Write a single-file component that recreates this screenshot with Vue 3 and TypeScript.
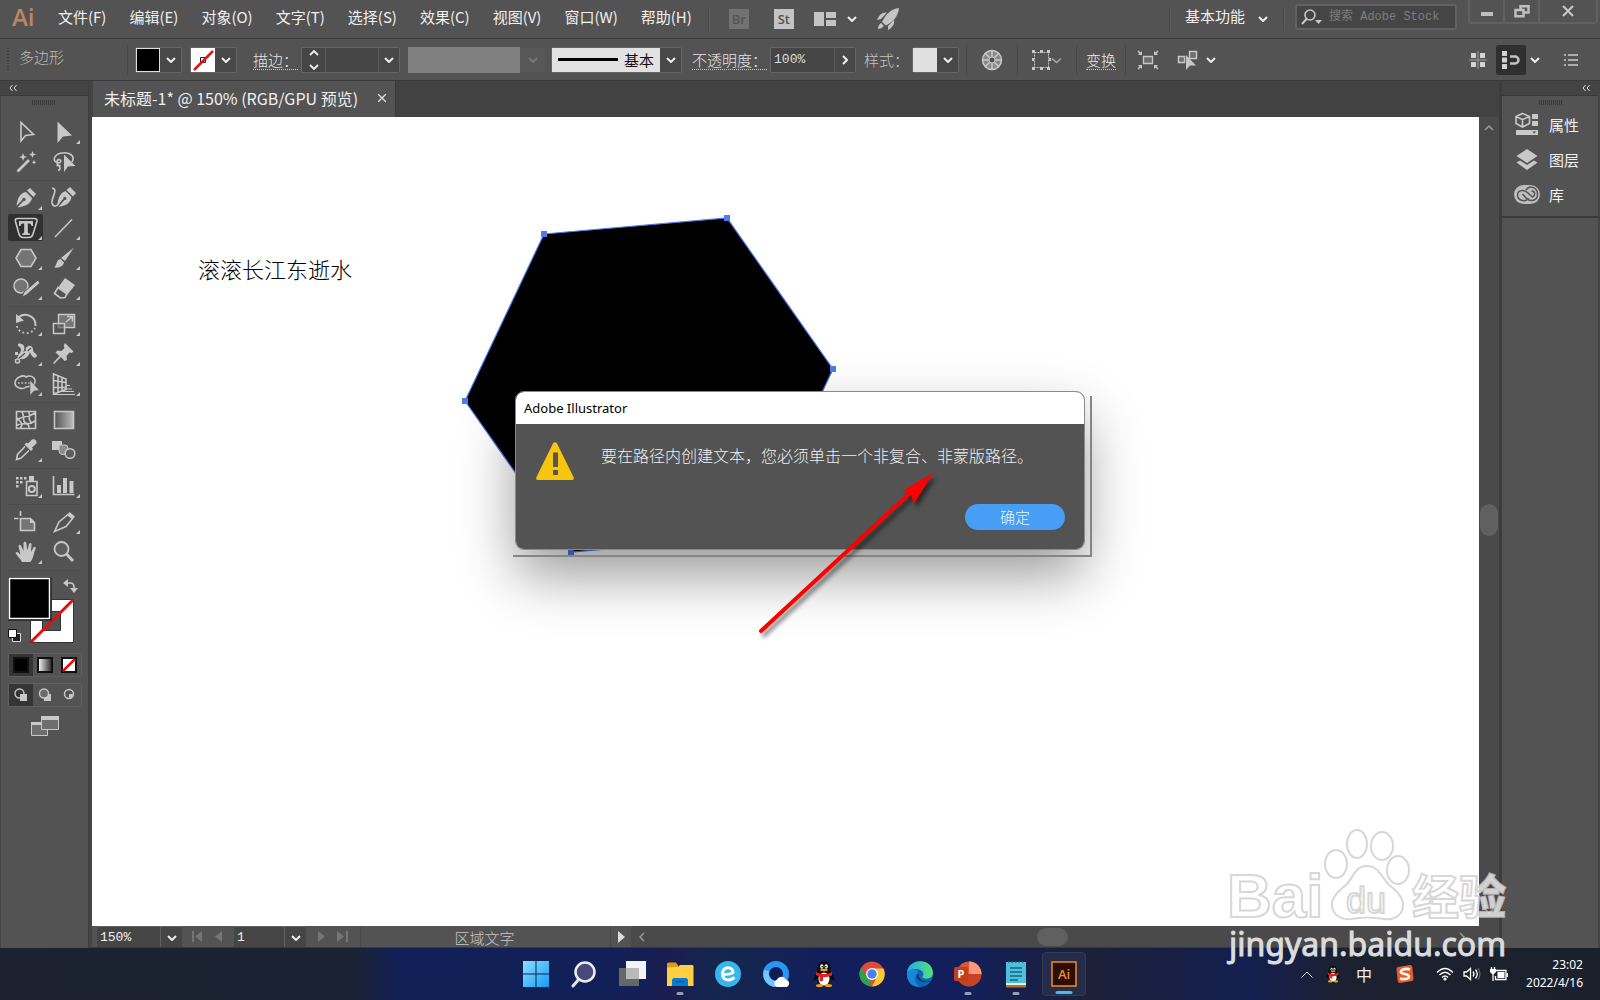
<script setup lang="ts">
import { ref } from 'vue'

interface Tool { name: string; art: string; more?: boolean; active?: boolean }

const menus: string[] = ['文件(F)', '编辑(E)', '对象(O)', '文字(T)', '选择(S)', '效果(C)', '视图(V)', '窗口(W)', '帮助(H)']

const L = 'fill="none" stroke="#c8c8c8" stroke-width="1.6"'
const F = 'fill="#c8c8c8"'

const toolGroups: Tool[][] = [
  [
    { name: '选择工具', art: `<path ${L} d="M9 4.500V23L13.500 17.500 21.500 16.500Z"/>` },
    { name: '直接选择工具', more: true, art: `<path ${F} d="M7.500 3.500V25L13 18.500L22 17.500Z"/>` },
    { name: '魔棒工具', art: `<path stroke="#c8c8c8" stroke-width="2.600" d="M5.500 23.500L17 12"/><path ${F} d="M11 5l1.200 3L15 9l-2.800 1L11 13 10 10 7 9l3-1zM20.500 3l1 2.600L24 6.500l-2.500 1-1 2.500-1-2.500-2.500-1 2.500-.9zM22 12l.7 1.500 1.600.7-1.600.7L22 16.500l-.7-1.600-1.500-.7 1.500-.7z"/>` },
    { name: '套索工具', art: `<path ${L} d="M22 14C26 7 18 4 12 5C4 6 2 13 7 14.500C11 15.500 12 12 9 11.500C6.500 11.500 6 16 9 18C11 20 10 22 8 22.500M6.500 17.500h4"/><path ${F} d="M14 6.500V24L18 18.500L25.500 18Z"/>` },
  ],
  [
    { name: '钢笔工具', more: true, art: `<path ${F} d="M18 4l6 6-2.500 3-6.500-6.500zM14 8l6 6c-1 6-6 8-14.500 9.500l6-6.500a1.700 1.700 0 1 0-1.200-1.200L4.500 22C5.500 14 8 9 14 8z"/>` },
    { name: '曲率工具', art: `<path ${L} d="M2 4C9 5 1 14 2 19C3 23 7 23 9 19"/><path ${F} d="M20 3l6 6-3 3.500-6.500-6.500zM15.500 7l6 6c-1 6-6 9-13 10l6-7a1.600 1.600 0 1 0-1.200-1.200l-6 7C8 14 10 9 15.500 7z"/>` },
    { name: '文字工具', more: true, active: true, art: `<path ${L} d="M5.500 4.500h17q3 0 2.400 3L21 20q-1 3.500-4 3.500h-6Q8 23.500 7 20L3.500 7.500Q2.500 4.500 5.500 4.500z"/><path ${F} d="M7 7h14v5h-1.500q-.2-2.500-2-2.500h-1.700V18q0 1.500 2 1.500V21h-7.600v-1.500q2 0 2-1.500V9.500h-1.700q-1.800 0-2 2.500H7z"/>` },
    { name: '直线段工具', more: true, art: `<path ${L} d="M5 23L22 5.500"/>` },
    { name: '多边形工具', more: true, art: `<path fill="#757575" stroke="#c8c8c8" stroke-width="1.600" d="M9 5.500h10l5 8.500-5 8.500H9L4 14z"/>` },
    { name: '画笔工具', more: true, art: `<path ${F} d="M24 3.500L15 17l-4-3zM10.500 15l3.500 3.500c-1 5-7 5.500-10 5 3-1.500 2-8 6.500-8.500z"/>` },
    { name: 'Shaper 工具', more: true, art: `<circle cx="9" cy="12" r="7" fill="#757575" stroke="#c8c8c8" stroke-width="1.600"/><path fill="#c8c8c8" stroke="#535353" d="M26 6l2 3-13 11.500-5 3 2-5.500z"/>` },
    { name: '橡皮擦工具', more: true, art: `<path ${F} d="M15 4l10 7-7 9-9.500-7z"/><path ${L} d="M8 13.500l9 6.500-2 3.500-4.500.5-6-4.500z"/>` },
  ],
  [
    { name: '旋转工具', more: true, art: `<path fill="none" stroke="#c8c8c8" stroke-width="2" d="M6 8C12 2 24 5 23.500 16"/><path ${F} d="M4 4v9l8-2.500z"/><path fill="none" stroke="#c8c8c8" stroke-width="1.800" stroke-dasharray="1.800 2.600" d="M5 16c1 8 14 10 18 2"/>` },
    { name: '比例缩放工具', more: true, art: `<path fill="#757575" stroke="#c8c8c8" stroke-width="1.500" d="M8.500 4.500h16v13h-16z"/><path fill="#535353" fill-opacity=".6" stroke="#c8c8c8" stroke-width="1.500" d="M3.500 13.500h11v10h-11z"/><path ${L} d="M16 12l6-5m-5-.5h5.500v5"/>` },
    { name: '宽度工具', more: true, art: `<path ${F} d="M6 4c4-2 9 3 5 8l3-1c-2-5 6-8 7-2 0 5 3 3 4 7-2 4-6 0-7-4-1 4-5 8-9 7-4 1-4-3-2-5 3-3 3-6-1-8z"/><path stroke="#535353" stroke-width="1.200" d="M5 20L19 8"/><circle cx="5.500" cy="21" r="2" ${L}/><path ${F} d="M3 12h3v3H3zM12 12l3-2 2 3-3 2z"/>` },
    { name: '操控变形工具', more: true, art: `<path ${F} d="M15 3l8.500 8.500-2 1.500-2-.5-3 3.500.5 4-2.500 1-3.500-4L4 24l-1-1 6.500-7-4-3.500 2-2 4 .5 3-3-.8-2.500z"/>` },
    { name: '形状生成器工具', more: true, art: `<path ${L} d="M14 7c7-4 13 5 6 9l-6 1c-3 3-11 1-11-4s8-9 11-6z"/><path stroke="#c8c8c8" stroke-width="1.700" stroke-dasharray="1.700 1.700" d="M6 13h12"/><path fill="#c8c8c8" stroke="#535353" stroke-width=".6" d="M18 10v15.500l4-4.500 5.500-.5z"/>` },
    { name: '透视网格工具', more: true, art: `<path ${L} d="M3.500 4v20L16 19.500V9zM8 6.500v15.500M12 8v12.500M3.500 10.500l12.500 2M3.500 17.500H16"/><path stroke="#c8c8c8" d="M16 15.500h4M14 19h8M9 21.500h15M4 24.500h21"/>` },
  ],
  [
    { name: '网格工具', art: `<path ${L} d="M4.500 5.500h19v17h-19zM4 15c5-6 10-2 19-8M9 5c5 4 0 10 5 12 3 2 3 3 3 6M16 5c4 4-2 8 4 12M4 20c6-6 10 2 19-5M8 22c4-3 1-6-3-10"/>` },
    { name: '渐变工具', art: `<defs><linearGradient id="tg"><stop stop-color="#555"/><stop offset="1" stop-color="#bbb"/></linearGradient></defs><path fill="url(#tg)" stroke="#c8c8c8" stroke-width="1.600" d="M4.500 5.500h19v17h-19z"/>` },
    { name: '吸管工具', more: true, art: `<path ${F} d="M20 3.500c3-1.500 6 2 4 4.500l-4 3.500 1 1.500-2 2-6.500-6.500 2-2L16 7.500z"/><path ${L} d="M13 10.500L5.500 18.500 4.500 23.500 9 22l8-7.500"/>` },
    { name: '混合工具', art: `<path ${F} d="M2 5h10v9H2z"/><path fill="#8c8c8c" stroke="#c8c8c8" d="M9 9h6q3 0 3 3v4q-2 3-6 2.500-3-.5-3-3.500z"/><circle cx="20" cy="17.500" r="4.800" fill="#5c5c5c" stroke="#c8c8c8" stroke-width="1.500"/>` },
  ],
  [
    { name: '符号喷枪工具', more: true, art: `<path ${F} d="M4 5h2.500v2.500H4zM8 5h2.500v2.500H8zM12 5h2.500v2.500H12zM4 9h2.500v2.500H4zM8 9h2.500v2.500H8zM4 13h2.500v2.500H4zM17 4h5v5h-5z"/><path ${L} d="M14.500 9.500h10.500v14H14.500z"/><circle cx="19.800" cy="17" r="3" fill="none" stroke="#c8c8c8" stroke-width="2"/>` },
    { name: '柱形图工具', more: true, art: `<path ${L} d="M3.500 4v18.500h21"/><path ${F} d="M7 13h4v8H7zM13 6h4v15h-4zM19.500 9h4v12h-4z"/>` },
  ],
  [
    { name: '画板工具', art: `<path fill="#757575" stroke="#c8c8c8" stroke-width="1.600" d="M8.500 10.500h10l4 4v8h-14z"/><path ${F} d="M18 10v5h5z"/><path ${L} d="M8.500 3v5M2 10.500h4.500"/>` },
    { name: '切片工具', more: true, art: `<path ${L} d="M4.500 23.500L9 14l9-7.500 4.500 4-6.500 8z"/><path ${F} d="M17 7l2.500-3 5.500 4.500-2.500 3z"/>` },
    { name: '抓手工具', more: true, art: `<path ${F} d="M10 24c-2-4-5-6-6.500-9 1-2 3-.5 5 2L6.500 8c1-2 2-1.500 3 .5l2 4.500L11.500 5c1-2 2.500-1.500 2.800 0l1 7.500L17 6c1-2 3-1 2.500 1l-.5 7 2.500-4.500c1-1.500 3-.5 2 1.500-2 5-2 9-5 13z"/>` },
    { name: '缩放工具', art: `<circle cx="11.500" cy="11" r="7" fill="#5e5e5e" stroke="#c8c8c8" stroke-width="1.800"/><path stroke="#c8c8c8" stroke-width="3" d="M16.500 16l6.500 7"/>` },
  ],
]

const panels = [
  { name: '属性', art: `<path ${L} d="M8.500 1.500l7 3v7l-7 3.500-6.500-3.500v-7zM2 4.500l6.500 3 7-3M8.500 7.500V15"/><path ${F} d="M18 2h6v5h-6zM18 9h6v5h-6zM2 18h22v5H2z"/><path fill="#444" d="M18.500 19.500h3.500l-1.800 2z"/>` },
  { name: '图层', art: `<path ${F} d="M13 2l10.500 7L13 16 2.500 9zM2.500 15.500l3.500-2 7 4.500 7-4.500 3.500 2L13 23z"/>` },
  { name: '库', art: `<rect x="0" y="3" width="26" height="19" rx="9.500" fill="#bdbdbd"/><path fill="none" stroke="#535353" stroke-width="1.500" d="M12 8c4-6 12-2 11.500 5-.5 6-7 7-11 3.500L8.500 12M15 16.500C10 21 3.500 18 3.500 13S10 7 14 11l4.500 4c3-1 3-6-1-6"/>` },
]

const penguin = `<ellipse cx="14" cy="16" rx="8" ry="9" fill="#0a0a0c"/><ellipse cx="14" cy="8.500" rx="6.500" ry="7.500" fill="#0a0a0c"/><ellipse cx="14" cy="19" rx="5.500" ry="6.500" fill="#fff"/><path d="M6 14Q3 18 4 21l4-4zM22 14q3 4 2 7l-4-4z" fill="#0a0a0c"/><ellipse cx="11.800" cy="6.500" rx="1.600" ry="2.200" fill="#fff"/><ellipse cx="16.200" cy="6.500" rx="1.600" ry="2.200" fill="#fff"/><circle cx="12.200" cy="6.800" r=".8"/><circle cx="15.800" cy="6.800" r=".8"/><ellipse cx="14" cy="10" rx="3.800" ry="1.200" fill="#f5a400"/><path d="M6 12q8 4 16 0v3.500q-4 2-9 1.800V21H9.500v-4.500L6 15z" fill="#e61c23"/><ellipse cx="9.500" cy="25.500" rx="3.500" ry="1.600" fill="#f5a400"/><ellipse cx="18.500" cy="25.500" rx="3.500" ry="1.600" fill="#f5a400"/>`

const apps = [
  { name: '开始', state: '', art: `<defs><linearGradient id="win" x2="1" y2="1"><stop stop-color="#8be0ff"/><stop offset="1" stop-color="#159cf3"/></linearGradient></defs><path fill="url(#win)" d="M1 1h12.500v12.500H1zM14.500 1H27v12.500H14.500zM1 14.500h12.500V27H1zM14.500 14.500H27V27H14.500z"/>` },
  { name: '搜索', state: '', art: `<path stroke="#dfe3ee" stroke-width="3" stroke-linecap="round" d="M9 19l-6 7"/><circle cx="15" cy="12" r="9.500" fill="#474a78" stroke="#eceff6" stroke-width="2.500"/>` },
  { name: '任务视图', state: '', art: `<path fill="#f2f3f6" d="M8 1h20v18H8z"/><path fill="#6f6f6d" fill-opacity=".9" d="M1 8h20v18H1z"/><path fill="#b9b9b9" d="M8 8h13v11H8z"/>` },
  { name: '文件资源管理器', state: 'open', art: `<path fill="#dc9a16" d="M1 4q0-1.500 1.500-1.500H10L12.500 6v5H1z"/><path fill="#ffd042" d="M1 7.500L12 7l2-2h12.500q1 0 1 1.500V26H1z"/><path fill="#0b7bd0" d="M6 26v-5.500q0-2.500 2.500-2.500h11q2.500 0 2.500 2.500V26z"/><path stroke="#0b5ba0" stroke-width="1.500" d="M10 21.500h8"/>` },
  { name: '浏览器', state: '', art: `<circle cx="14" cy="14" r="13" fill="#35b7ed"/><path fill="none" stroke="#fff" stroke-width="3" stroke-linecap="round" d="M8.500 14.500Q17 14.500 19 12.500C19 6 9.500 6 8.500 13c-.5 7.500 7 8.500 11 5"/>` },
  { name: 'QQ浏览器', state: '', art: `<circle cx="14" cy="14" r="10" fill="#0d1d56" stroke="#2b95f5" stroke-width="6"/><path fill="#72c7ff" d="M2 10C-1 18 5 26 13 27l1-6C8 20 6 15 7 11z"/><path fill="#fff" d="M15 27a4 4 0 0 1 0-7.500 5 5 0 0 1 9 0 4 4 0 0 1 1 7.500z"/>` },
  { name: 'QQ', state: '', art: penguin },
  { name: 'Chrome', state: '', art: `<circle cx="14" cy="14" r="12.500" fill="#dc4a40"/><path fill="#2ba24c" d="M3 8l8.500 13L14 26.500A12.500 12.500 0 0 1 3 8z"/><path fill="#fbc934" d="M14 8.500h11.500A12.500 12.500 0 0 1 14 26.500L19.500 16z"/><circle cx="14" cy="14" r="6" fill="#fff"/><circle cx="14" cy="14" r="4.700" fill="#4381ee"/>` },
  { name: 'Edge', state: '', art: `<defs><linearGradient id="edge"><stop stop-color="#1eaee5"/><stop offset="1" stop-color="#59e077"/></linearGradient></defs><circle cx="14" cy="14" r="13" fill="#0c66ba"/><path fill="url(#edge)" d="M1 13C2-2 26-3 27 13c0 6-8 7-11 4 4-4-1-8-6-8-4 0-8 2-9 4z"/><path fill="#1689d6" d="M1 12c5-5 12-2 11 1-5 3-4 10 2 13.500C5 28 0 20 1 12z"/><path fill="#11225b" d="M13 13c-2 5 3 10 12 8-7 3-15-1-14-6z"/>` },
  { name: 'PowerPoint', state: 'open', art: `<circle cx="15" cy="14" r="12.500" fill="#dc5636"/><path fill="#ff9879" d="M15 1.500A12.500 12.500 0 0 1 27.500 14H15z"/><path fill="#b93316" d="M15 14h12.500A12.500 12.500 0 0 1 5 21z" opacity=".6"/><rect x="0" y="7" width="14" height="14" rx="1.500" fill="#c43e1c"/><text x="7" y="18" text-anchor="middle" font-family="Open Sans, sans-serif" font-weight="700" font-size="11" fill="#fff">P</text>` },
  { name: '记事本', state: 'open', art: `<path fill="#4fbfdb" d="M4 2h20v21H4z"/><path fill="#e8eef0" d="M4 23h20v2H4z"/><path fill="#b9702c" d="M4 25h20v2.500H4z"/><path stroke="#13697f" stroke-width="1.600" d="M8 8h12M8 12h12M8 16h12M8 20h8"/><path stroke="#13697f" stroke-width="1.500" stroke-dasharray="1.500 2" d="M6 2h17"/>` },
  { name: 'Illustrator', state: 'current', art: `<path fill="#2b0f05" stroke="#ef8a2b" stroke-width="1.500" d="M2 2h24v24H2z"/><text x="14" y="19" text-anchor="middle" font-family="Open Sans, sans-serif" font-weight="600" font-size="13" fill="#f28b26">Ai</text>` },
]

const vertices: [number, number][] = [[452, 117], [635, 101], [741, 252], [663, 419], [479, 435], [373, 284]]
const outline = vertices.map(p => p.join(',')).join(' ')

const search = ref('')
const opacity = ref('100%')
const strokeWidth = ref('')
</script>

<template>
  <div class="app">
    <header class="menubar">
      <b class="brand">Ai</b>
      <nav class="menus">
        <button v-for="m in menus" :key="m" type="button">{{ m }}</button>
      </nav>
      <i class="sep tall"></i>
      <div class="launch">
        <button type="button" class="tile off">Br</button>
        <button type="button" class="tile">St</button>
        <button type="button" class="arrange" aria-label="排列文档">
          <svg width="22" height="16" viewBox="0 0 22 16"><path fill="#c4c4c4" d="M0 1h10v14H0zM12 1h10v6H12zM12 9h10v6H12z" /></svg>
          <svg class="chev" viewBox="0 0 10 6"><path d="M1 1l4 4 4-4" /></svg>
        </button>
        <button type="button" aria-label="GPU 性能">
          <svg width="22" height="22" viewBox="0 0 22 22"><path fill="#c4c4c4" d="M22 0C14 1 9 6 5 14l4 3.500C16 14 21 9 22 0zM10 4.500C5 4 2 7 0 12l4-1zM17 12c1 4-2 8-6 10v-4zM4 15c-2 1-3 4-3 6 2 0 4-1 6-3z" /></svg>
        </button>
      </div>
      <div class="right">
        <i class="sep tall"></i>
        <label class="workspace">
          <select aria-label="工作区"><option>基本功能</option></select>
          <svg class="chev" viewBox="0 0 10 6"><path d="M1 1l4 4 4-4" /></svg>
        </label>
        <i class="sep tall"></i>
        <label class="search">
          <svg width="22" height="16" viewBox="0 0 22 16"><circle cx="9" cy="6" r="5" fill="none" stroke="#c8c8c8" stroke-width="1.600" /><path stroke="#c8c8c8" stroke-width="2" d="M5.500 10L1 15" /><path fill="#c8c8c8" d="M14 11h7l-3.500 4z" /></svg>
          <input v-model="search" type="text" placeholder="搜索 Adobe Stock" aria-label="搜索" />
        </label>
        <div class="winbtns">
          <button type="button" aria-label="最小化"><svg width="14" height="14"><path fill="#c0c0c0" d="M1 8h12v4H1z" /></svg></button>
          <button type="button" aria-label="还原"><svg width="16" height="14"><path fill="none" stroke="#c0c0c0" stroke-width="2.500" d="M6.500 5V2.200h8V8.500H10M1.500 6h8v6.200h-8z" /></svg></button>
          <button type="button" class="close" aria-label="关闭"><svg width="14" height="14"><path stroke="#c8c8c8" stroke-width="2" d="M2 2l10 10M12 2L2 12" /></svg></button>
        </div>
      </div>
    </header>

    <div class="control">
      <i class="grip"></i>
      <span class="kind">多边形</span>
      <i class="sep"></i>
      <button type="button" class="box fill" aria-label="填色"><i class="sw black"></i><span class="dd"><svg class="chev" viewBox="0 0 10 6"><path d="M1 1l4 4 4-4" /></svg></span></button>
      <button type="button" class="box line" aria-label="描边颜色">
        <svg class="sw" width="24" height="24" viewBox="0 0 24 24"><path fill="#fff" d="M0 0h24v24H0z" /><path fill="none" stroke="#222" d="M9.500 9.500h5v5h-5z" /><path stroke="#d81818" stroke-width="2.500" d="M3 22L22 3" /></svg>
        <span class="dd"><svg class="chev" viewBox="0 0 10 6"><path d="M1 1l4 4 4-4" /></svg></span>
      </button>
      <label class="lab link first" for="sw">描边：</label>
      <div class="box weight">
        <button type="button" class="step" aria-label="步进"><svg width="10" height="20" viewBox="0 0 10 20"><path fill="none" stroke="#eee" stroke-width="1.800" d="M1 5l4-4 4 4M1 15l4 4 4-4" /></svg></button>
        <input id="sw" v-model="strokeWidth" type="text" />
        <button type="button" class="dd" aria-label="描边粗细"><svg class="chev" viewBox="0 0 10 6"><path d="M1 1l4 4 4-4" /></svg></button>
      </div>
      <button type="button" class="profile" disabled aria-label="变量宽度配置文件"><i></i><span class="dd"><svg class="chev" viewBox="0 0 10 6"><path d="M1 1l4 4 4-4" /></svg></span></button>
      <label class="box brush">
        <span class="face"><i></i><select aria-label="画笔定义"><option>基本</option></select></span>
        <span class="dd"><svg class="chev" viewBox="0 0 10 6"><path d="M1 1l4 4 4-4" /></svg></span>
      </label>
      <label class="lab link" for="op">不透明度：</label>
      <div class="box opacity">
        <input id="op" v-model="opacity" type="text" />
        <button type="button" class="dd" aria-label="不透明度"><svg width="6" height="10" viewBox="0 0 6 10"><path fill="none" stroke="#eee" stroke-width="2" d="M1 1l4 4-4 4" /></svg></button>
      </div>
      <span class="lab plain">样式：</span>
      <button type="button" class="box" aria-label="图形样式"><i class="sw"></i><span class="dd"><svg class="chev" viewBox="0 0 10 6"><path d="M1 1l4 4 4-4" /></svg></span></button>
      <div class="extras">
        <i class="sep"></i>
        <button type="button" aria-label="重新着色图稿"><svg width="22" height="22" viewBox="0 0 22 22"><circle cx="11" cy="11" r="9.500" fill="#8a8a8a" stroke="#c8c8c8" stroke-width="1.500" /><path stroke="#c8c8c8" stroke-width="1.500" d="M11 1v20M1 11h20M4 4l14 14M18 4L4 18" /><circle cx="11" cy="11" r="3" fill="#535353" stroke="#c8c8c8" /></svg></button>
        <i class="sep"></i>
        <button type="button" aria-label="对齐"><svg width="30" height="20" viewBox="0 0 30 20"><path fill="none" stroke="#c8c8c8" stroke-dasharray="2 1" d="M2.500 2.500h14v15h-14z" /><path fill="#c8c8c8" d="M0 0h3v3H0zM8 0h3v3H8zM15 0h3v3h-3zM0 17h3v3H0zM8 17h3v3H8zM15 17h3v3h-3zM0 8h2v3H0zM17 8h2v3h-2z" /><path fill="none" stroke="#aaa" stroke-width="1.500" d="M20 8.500l4.500 4 4.500-4" /></svg></button>
        <i class="sep"></i>
        <button type="button" class="lab link transform">变换</button>
        <i class="sep"></i>
        <button type="button" class="isolate" aria-label="隔离选中的对象"><svg width="22" height="20" viewBox="0 0 22 20"><path fill="#6e6e6e" stroke="#c8c8c8" stroke-width="1.300" d="M6.500 6.500h9v7h-9z" /><path fill="#c8c8c8" d="M5 5V1L1 5zM17 5V1l4 4zM5 15v4l-4-4zM17 15v4l4-4z" /><path stroke="#c8c8c8" stroke-width="1.500" d="M1 1l3 3M21 1l-3 3M1 19l3-3M21 19l-3-3" /></svg></button>
        <button type="button" class="similar" aria-label="选择类似的对象"><svg width="22" height="20" viewBox="0 0 22 20"><path fill="#6e6e6e" stroke="#c8c8c8" stroke-width="1.500" d="M12.500 1.500h7v7h-7zM1.500 6.500h6v6h-6z" /><path fill="#c8c8c8" d="M9 5v15l4-4.500h6z" /></svg><svg class="chev" viewBox="0 0 10 6"><path d="M1 1l4 4 4-4" /></svg></button>
      </div>
      <div class="right tail">
        <button type="button" aria-label="对齐像素网格"><svg width="18" height="18" viewBox="0 0 18 18"><path fill="#d4d4d4" d="M2 2h5v5H2zM11 2h5v5h-5zM2 11h5v5H2zM11 11h5v5h-5z" /><path stroke="#a0a0a0" d="M0 9h18M9 0v18" /></svg></button>
        <button type="button" class="dark" aria-label="对齐像素"><svg width="18" height="18" viewBox="0 0 18 18"><path fill="#d4d4d4" d="M0 0h5v5H0zM0 6.500h5v5H0zM0 13h5v5H0z" /><path fill="none" stroke="#c4c4c4" stroke-width="2.500" d="M8 5.500h5a3.500 3.500 0 0 1 0 7H8" /></svg></button>
        <svg class="chev" viewBox="0 0 10 6"><path d="M1 1l4 4 4-4" /></svg>
        <button type="button" class="list" aria-label="面板菜单"><svg width="14" height="12" viewBox="0 0 14 12"><path stroke="#ccc" stroke-width="1.500" d="M0 1h2M4 1h10M0 6h2M4 6h10M0 11h2M4 11h10" /></svg></button>
      </div>
    </div>

    <main class="work">
      <aside class="tools">
        <div class="panelhead"><svg width="8" height="6" viewBox="0 0 8 6"><path fill="none" stroke="#ddd" d="M3.500 0L1 3l2.500 3M7.500 0L5 3l2.500 3" /></svg></div>
        <i class="hgrip"></i>
        <div v-for="(g, gi) in toolGroups" :key="gi" class="toolgroup">
          <button v-for="t in g" :key="t.name" type="button" :aria-label="t.name" :class="{ more: t.more, active: t.active }">
            <svg width="28" height="28" viewBox="0 0 28 28" v-html="t.art"></svg>
          </button>
        </div>
        <svg class="fillstroke" width="72" height="68" viewBox="0 0 72 68">
          <path fill="#fff" stroke="#333" d="M22.500 22.500h43v43h-43z" /><path fill="#535353" stroke="#333" d="M34.500 34.500h18v19h-18z" /><path stroke="#e01010" stroke-width="3" d="M23 65L65 23" />
          <path fill="#000" stroke="#333" d="M.5.500h43v43H.5z" /><path fill="#000" stroke="#fff" stroke-width="1.500" d="M1.500 1.500h40v40h-40z" />
          <path fill="none" stroke="#c8c8c8" stroke-width="1.600" d="M58 6h4q4 0 4 4v3" /><path fill="#c8c8c8" d="M55 6l5-4v8zM62 11h8l-4 5z" />
          <path fill="#222" stroke="#ddd" d="M4.500 56.500h8v8h-8z" /><path fill="#fff" stroke="#111" d="M.5 52.500h8v8h-8z" />
        </svg>
        <div class="trio">
          <button type="button" class="on" aria-label="颜色"><i class="chip solid"></i></button>
          <button type="button" aria-label="渐变"><i class="chip grad"></i></button>
          <button type="button" aria-label="无"><svg class="chip" width="16" height="16" viewBox="0 0 16 16"><path fill="#fff" stroke="#111" stroke-width="2" d="M1 1h14v14H1z" /><path stroke="#e01010" stroke-width="2.500" d="M2 14L14 2" /></svg></button>
        </div>
        <div class="trio">
          <button type="button" class="on" aria-label="正常绘图"><svg width="14" height="14" viewBox="0 0 14 14"><circle cx="5.500" cy="5.500" r="4.500" fill="none" stroke="#c8c8c8" stroke-width="1.400" /><path fill="#c8c8c8" d="M6 6h7v7H6z" /></svg></button>
          <button type="button" aria-label="背面绘图"><svg width="14" height="14" viewBox="0 0 14 14"><path fill="#c8c8c8" d="M6 6h7v7H6z" /><circle cx="6" cy="5.500" r="4.500" fill="#6a6a6a" stroke="#c8c8c8" stroke-width="1.400" /></svg></button>
          <button type="button" aria-label="内部绘图"><svg width="14" height="14" viewBox="0 0 14 14"><circle cx="7" cy="6" r="4.500" fill="none" stroke="#c8c8c8" stroke-width="1.400" /><path fill="#c8c8c8" d="M7 6h4q-.5 4-4 4z" /></svg></button>
        </div>
        <button type="button" class="screen" aria-label="更改屏幕模式"><svg width="28" height="20" viewBox="0 0 28 20"><path fill="#6e6e6e" stroke="#c8c8c8" d="M.5 6.500h16v13H.5z" /><path fill="#c8c8c8" d="M0 6h17v3H0z" /><path fill="#6e6e6e" stroke="#c8c8c8" d="M10.500.5h17v13h-17z" /><path fill="#c8c8c8" d="M10 0h18v4H10z" /></svg></button>
      </aside>

      <section class="doc">
        <div class="tabs">
          <div class="tab"><span>未标题-1* @ 150% (RGB/GPU 预览)</span><button type="button" aria-label="关闭文档"><svg width="8" height="8" viewBox="0 0 8 8"><path stroke="#e0e0e0" stroke-width="1.300" d="M0 0l8 8M8 0L0 8" /></svg></button></div>
        </div>
        <div class="stage">
          <div class="canvas">
            <svg class="art" width="100%" height="100%">
              <polygon :points="outline" fill="#000" stroke="#4f7bee" stroke-width="1.200" />
              <rect v-for="(p, i) in vertices" :key="i" :x="p[0] - 3" :y="p[1] - 3" width="6" height="6" fill="#4f7bee" />
            </svg>
            <p class="verse">滚滚长江东逝水</p>
          </div>
          <div class="vscroll">
            <svg width="10" height="6" viewBox="0 0 10 6"><path d="M1 5l4-4 4 4" /></svg>
            <i></i>
            <svg width="10" height="6" viewBox="0 0 10 6"><path d="M1 1l4 4 4-4" /></svg>
          </div>
        </div>
        <div class="status">
          <label class="num zoomed"><select aria-label="缩放"><option>150%</option></select><span><svg class="chev" viewBox="0 0 10 6"><path d="M1 1l4 4 4-4" /></svg></span></label>
          <div class="pager">
            <button type="button" aria-label="首项"><svg width="11" height="11" viewBox="0 0 11 11"><path d="M0 0h2v11H0zM10 0v11L3 5.500z" /></svg></button>
            <button type="button" aria-label="上一项"><svg width="7" height="11" viewBox="0 0 7 11"><path d="M7 0v11L0 5.500z" /></svg></button>
          </div>
          <label class="num page"><select aria-label="画板导航"><option>1</option></select><span><svg class="chev" viewBox="0 0 10 6"><path d="M1 1l4 4 4-4" /></svg></span></label>
          <div class="pager next">
            <button type="button" aria-label="下一项"><svg width="7" height="11" viewBox="0 0 7 11"><path d="M0 0v11l7-5.500z" /></svg></button>
            <button type="button" aria-label="末项"><svg width="11" height="11" viewBox="0 0 11 11"><path d="M0 0v11l7-5.500zM9 0h2v11H9z" /></svg></button>
          </div>
          <span class="mode">区域文字</span>
          <button type="button" class="play" aria-label="状态栏选项"><svg width="7" height="12" viewBox="0 0 7 12"><path fill="#ddd" d="M0 0v12l7-6z" /></svg></button>
          <div class="hscroll">
            <svg width="6" height="10" viewBox="0 0 6 10"><path d="M5 1L1 5l4 4" /></svg>
            <i></i>
            <svg width="6" height="10" viewBox="0 0 6 10"><path d="M1 1l4 4-4 4" /></svg>
          </div>
        </div>
      </section>

      <aside class="dock">
        <div class="panelhead end"><svg width="8" height="6" viewBox="0 0 8 6"><path fill="none" stroke="#ddd" d="M3.500 0L1 3l2.500 3M7.500 0L5 3l2.500 3" /></svg></div>
        <div class="docked">
          <i class="hgrip"></i>
          <button v-for="p in panels" :key="p.name" type="button"><svg width="26" height="26" viewBox="0 0 26 26" v-html="p.art"></svg>{{ p.name }}</button>
        </div>
      </aside>
    </main>

    <footer class="taskbar">
      <div class="side"></div>
      <div class="apps">
        <button v-for="a in apps" :key="a.name" type="button" :aria-label="a.name" :class="a.state"><svg width="28" height="28" viewBox="0 0 28 28" v-html="a.art"></svg></button>
      </div>
      <div class="side tray">
        <svg width="12" height="7" viewBox="0 0 12 7"><path fill="none" stroke="#ddd" d="M.5 6.500L6 1l5.500 5.500" /></svg>
        <svg class="qq" width="18" height="18" viewBox="0 0 28 28" v-html="penguin"></svg>
        <span class="ime">中</span>
        <svg class="sogou" width="18" height="18" viewBox="0 0 18 18"><path fill="#ee5a24" d="M2 2l12-2q2 0 2.300 2L17.500 14q0 1.500-1.500 2L4 18q-2 0-2.300-2L.5 4Q.5 2.300 2 2z" /><path fill="none" stroke="#fff" stroke-width="2.600" d="M14 4.500C10 3 4 4.500 5 7.500c1 2 8 1 8 4S7 14.500 4 13.500" /></svg>
        <svg class="wifi" width="18" height="14" viewBox="0 0 18 14"><path fill="none" stroke="#fff" stroke-width="1.300" d="M1 5.500q8-8 16 0M3.500 8q5.500-5.500 11 0M6 10.500q3-3 6 0" /><circle cx="9" cy="12" r="1.600" fill="#fff" /></svg>
        <svg width="18" height="14" viewBox="0 0 18 14"><path fill="none" stroke="#fff" stroke-width="1.300" d="M1 5h2.500L7.500 1.500v11L3.500 9H1zM10 4.500q2 2.500 0 5M12.500 2.500q3.500 4.500 0 9" /><path fill="none" stroke="#777" d="M15 1q4 6 0 12" /></svg>
        <svg width="18" height="16" viewBox="0 0 18 16"><path fill="none" stroke="#fff" stroke-width="1.300" d="M6 4.500h10v9H5.500V10M1.500 1v2M4.500 1v2M3 7v8" /><path fill="#fff" d="M0 3h6v3L4 8H2L0 6zM7.500 6h7v6h-7zM16.500 7H18v4h-1.500z" /></svg>
        <time>23:02<br />2022/4/16</time>
      </div>
    </footer>

    <div class="modal" role="alertdialog" aria-labelledby="dt">
      <i class="ghost"></i>
      <div class="dialog">
        <h1 id="dt">Adobe Illustrator</h1>
        <div class="dbody">
          <svg width="38" height="38" viewBox="0 0 38 38"><path fill="#f7c50c" d="M17 1.500q2-2.500 4 0L37.500 35q1 3-1.500 3H2q-2.500 0-1.500-3z" /><path fill="#555" d="M17 10.500h5V25h-5zM17 28h5v5h-5z" /></svg>
          <p>要在路径内创建文本，您必须单击一个非复合、非蒙版路径。</p>
        </div>
        <div class="actions"><button type="button">确定</button></div>
      </div>
      <svg class="pointer" width="190" height="180" viewBox="0 0 190 180">
        <path fill="none" stroke="#f00" stroke-width="4" stroke-linecap="round" d="M9 164L158 26" />
        <path fill="#f00" d="M180 7L151 24l8 2 3 10z" stroke="#f00" />
      </svg>
    </div>

    <svg class="watermark" width="300" height="140" viewBox="0 0 300 140">
      <g class="mark">
        <ellipse cx="116" cy="34" rx="11" ry="14" /><ellipse cx="137" cy="14" rx="10" ry="14" /><ellipse cx="162" cy="16" rx="11" ry="14" /><ellipse cx="178" cy="40" rx="11" ry="14" />
        <path d="M147 36c12 0 15 12 22 19 8 6 15 13 14 21-1 10-9 14-18 13-12-2-24-2-34 0-10 1-18-4-19-13-1-9 7-15 14-21 7-7 9-19 21-19z" />
        <text x="7" y="87" class="bai">Bai</text>
        <text x="126" y="83" class="du">du</text>
        <text x="192" y="84" class="jy">经验</text>
      </g>
      <text x="9" y="126" class="site">jingyan.baidu.com</text>
    </svg>
  </div>
</template>

<style>
html, body { margin: 0; background: #535353; }
</style>

<style scoped>
.app { position: relative; display: flex; flex-direction: column; min-height: 100vh; overflow: hidden; background: #535353; color: #f0f0f0; font: 15px/20px "Noto Sans CJK SC", "Noto Sans", sans-serif; }
.app * { box-sizing: border-box; }
button, select, input { border: 0; padding: 0; margin: 0; background: none; color: inherit; font: inherit; border-radius: 0; outline: 0; }
select { appearance: none; }
button { display: flex; align-items: center; justify-content: center; }
svg { flex: none; display: block; }
i { display: block; flex: none; }
.chev { width: 10px; height: 6px; fill: none; stroke: #eee; stroke-width: 2; }
.right { display: flex; margin-left: auto; align-items: center; }
.sep { width: 1px; height: 30px; background: #474747; }
.sep.tall { width: 2px; height: 24px; background: #474747; border-right: 1px solid #5e5e5e; }

.menubar { display: flex; align-items: center; height: 39px; border-bottom: 1px solid #3a3a3a; padding-left: 12px; }
.brand { width: 46px; padding-bottom: 4px; color: #bd8663; font: 600 24px/32px "Open Sans", sans-serif; }
.menus { display: flex; gap: 23px; padding-bottom: 4px; margin-right: 16px; }
.launch { display: flex; align-items: center; margin-left: 19px; }
.tile { width: 20px; height: 20px; margin-right: 25px; background: #c4c4c4; color: #535353; font: 600 13px/20px "Open Sans", sans-serif; }
.tile + .tile { margin-right: 20px; }
.tile.off { background: #727272; color: #555; }
.arrange { gap: 11px; margin-right: 20px; }
.menubar .right { align-self: stretch; padding-right: 2px; }
.workspace { display: flex; align-items: center; gap: 12px; margin: 0 15px 0 14px; }
.workspace select { height: 26px; padding-bottom: 6px; }
.search { display: flex; align-items: center; gap: 6px; width: 162px; height: 26px; margin: 0 11px 4px 10px; padding-left: 4px; border: 2px solid #616161; border-radius: 3px; background: #454545; }
.search input { flex: 1; min-width: 0; font: 13px/20px "Liberation Mono", "Noto Sans CJK SC", monospace; }
.search input::placeholder { color: #7d7d7d; font-size: 12px; opacity: 1; }
.winbtns { display: flex; align-self: flex-start; height: 24px; border: 2px solid #616161; border-top: 0; border-radius: 0 0 4px 4px; }
.winbtns button { width: 35px; border-right: 2px solid #616161; }
.winbtns .close { width: 56px; border-right: 0; }

.control { display: flex; align-items: center; height: 42px; padding-left: 7px; border-bottom: 1px solid #3a3a3a; }
.grip { width: 2px; height: 24px; margin-right: 10px; background: repeating-linear-gradient(#3c3c3c 0 1px, transparent 1px 3px); }
.kind { width: 108px; padding-bottom: 6px; color: #bdbdbd; font-weight: 300; }
.box { display: flex; align-items: stretch; justify-content: flex-start; height: 26px; border: 1px solid #666; border-radius: 2px; background: #454545; }
.fill { margin: 0 8px 0 7px; }
.line { margin-right: 16px; }
.sw { width: 24px; height: 24px; background: #e0e0e0; }
.sw.black { background: #000; border: 1px solid #ddd; }
.dd { display: flex; width: 21px; align-items: center; justify-content: center; background: #484848; }
.lab { color: #e4e4e4; font-weight: 300; white-space: nowrap; }
.lab.link { border-bottom: 1px dotted #ccc; line-height: 19px; }
.first { margin-right: 3px; }
.step { width: 24px; border-right: 1px solid #5c5c5c; }
.weight input { width: 52px; }
.weight .dd, .opacity .dd { border-left: 1px solid #5c5c5c; }
.profile { height: 26px; margin: 0 6px 0 8px; }
.profile i { width: 112px; height: 26px; background: #808080; }
.profile .dd { width: 25px; height: 24px; background: #575757; }
.profile .chev { stroke: #777; }
.brush { margin-right: 10px; }
.face { display: flex; align-items: center; gap: 6px; width: 108px; padding-left: 6px; background: #e2e2e2; color: #111; }
.face i { width: 60px; height: 3px; background: #000; }
.opacity { margin: 0 8px 0 3px; }
.opacity input { width: 63px; padding-left: 3px; color: #ddd; font: 13px/20px "Liberation Mono", monospace; }
.plain { margin-right: 3px; color: #c4c4c4; }
.extras { display: flex; align-items: center; }
.extras button { margin: 0 14px; }
.extras > .sep:first-child { margin-left: 7px; }
.extras .transform { margin: 0 9px; color: #eee; }
.extras .isolate { margin: 0 14px 0 11px; }
.extras .similar { gap: 7px; margin: 0 0 0 4px; }
.tail { padding-right: 22px; }
.dark { width: 30px; height: 30px; margin: 0 4px 0 9px; border-radius: 2px; background: #2f2f2f; }
.list { margin-left: 24px; }

.work { flex: 1; display: flex; min-height: 0; }
.tools { width: 89px; flex: none; border-left: 1px solid #444; border-right: 1px solid #3d3d3d; }
.panelhead { display: flex; align-items: center; height: 15px; padding: 0 8px; background: #444; border-bottom: 1px solid #3a3a3a; }
.panelhead.end { justify-content: flex-end; }
.hgrip { width: 24px; height: 5px; margin: 4px auto 12px 31px; background: repeating-linear-gradient(90deg, #3a3a3a 0 1px, transparent 1px 2px); }
.toolgroup { display: grid; grid-template-columns: 35px 35px; column-gap: 3px; margin: 0 7px 2px; padding-bottom: 3px; border-bottom: 1px solid #4b4b4b; }
.toolgroup button { position: relative; height: 27px; margin: 1px 0 2px; border-radius: 2px; }
.toolgroup .active { background: #303030; }
.more::after { content: ""; position: absolute; right: 1px; bottom: 1px; border: 2px solid; border-color: transparent #c8c8c8 #c8c8c8 transparent; }
.fillstroke { margin: 6px 0 8px 7px; }
.trio { display: flex; width: 74px; height: 24px; margin: 0 0 6px 7px; border: 1px solid #5f5f5f; border-radius: 2px; }
.trio button { flex: 1; }
.trio .on { background: #353535; }
.chip { width: 16px; height: 16px; border: 2px solid #111; }
svg.chip { border: 0; }
.solid { background: #000; }
.grad { background: linear-gradient(90deg, #eee, #333); }
.screen { margin: 9px 0 0 30px; }

.doc { flex: 1; min-width: 0; display: flex; flex-direction: column; border-left: 3px solid #444; }
.tabs { display: flex; height: 36px; padding-left: 1px; background: #424242; }
.tab { display: flex; align-items: center; gap: 20px; padding: 0 9px 2px 11px; background: #535353; border-right: 1px solid #3a3a3a; font-size: 16px; }
.stage { flex: 1; display: flex; }
.canvas { position: relative; flex: 1; background: #fff; overflow: hidden; }
.art { position: absolute; inset: 0; }
.verse { position: absolute; left: 106px; top: 135px; margin: 0; color: #000; font-size: 22px; line-height: 32px; font-weight: 300; }
.vscroll { display: flex; flex-direction: column; align-items: center; justify-content: space-between; width: 20px; padding: 8px 0 12px; background: #4a4a4a; }
.vscroll svg, .hscroll svg { fill: none; stroke: #999; stroke-width: 1.5; }
.vscroll i { width: 18px; height: 32px; border-radius: 9px; background: #606060; }
.status { display: flex; height: 22px; border-bottom: 1px solid #3a3a3a; padding-left: 5px; }
.num { display: flex; border-top: 1px solid #646464; background: #454545; }
.num select { width: 63px; padding: 2px 0 0 3px; text-align: left; font: 13px/18px "Liberation Mono", monospace; }
.num.page select { width: 50px; }
.num span { display: flex; width: 22px; padding-top: 2px; align-items: center; justify-content: center; border-left: 1px solid #606060; }
.pager { display: flex; gap: 12px; padding: 0 12px 0 10px; }
.pager.next { padding: 0 12px; border-right: 1px solid #484848; }
.pager svg { fill: #757575; }
.mode { width: 249px; text-align: center; color: #c8c8c8; line-height: 24px; font-weight: 300; padding-right: 2px; }
.play { width: 21px; border-left: 1px solid #484848; }
.hscroll { flex: 1; display: flex; align-items: center; justify-content: space-between; padding: 0 34px 0 8px; background: #4a4a4a; }
.hscroll i { width: 31px; height: 18px; border-radius: 9px; background: #606060; }
.dock { width: 101px; flex: none; border-left: 3px solid #3c3c3c; border-right: 2px solid #444; }
.dock .hgrip { margin: 4px auto 2px 37px; }
.docked { padding-bottom: 4px; border-bottom: 2px solid #3a3a3a; }
.docked button { gap: 9px; height: 35px; margin-left: 12px; }

.taskbar { display: flex; height: 52px; background: linear-gradient(90deg, #1c222f 0, #1b2332 22%, #122058 25%, #122058 38%, #1a1e50 42%, #14274e 45%, #121f5c 52%, #121f5c 60%, #1c2038 68%, #141f50 78%, #1b2130 84%, #1b202c 100%); }
.side { flex: 1; display: flex; align-items: center; justify-content: flex-end; }
.apps { display: flex; }
.apps button { position: relative; width: 44px; height: 44px; margin: 4px 2px; border-radius: 4px; }
.apps .current { background: #252c48; border: 1px solid #343a54; }
.open::after, .current::after { content: ""; position: absolute; left: 50%; bottom: 1px; width: 7px; height: 3px; border-radius: 2px; background: #9aa0b4; transform: translateX(-50%); }
.current::after { width: 17px; background: #4cb8ee; }
.tray { gap: 9px; }
.qq { margin-left: 2px; }
.ime { margin: 0 15px 0 5px; font-size: 16px; }
.wifi { margin-left: 13px; }
time { width: 66px; margin-right: 17px; text-align: right; color: #fff; font: 12px/18px "Noto Sans", sans-serif; }

.modal { position: absolute; left: 50%; top: 392px; width: 568px; transform: translateX(-50%); }
.dialog { position: relative; border-radius: 8px; overflow: hidden; background: #535353; outline: 1px solid #8a8a8a; box-shadow: 0 26px 56px rgba(0, 0, 0, .4); }
.ghost { position: absolute; z-index: 1; left: -3px; top: 4px; right: -8px; bottom: -8px; border: solid #858585; border-width: 0 2px 2px 0; }
.dialog h1 { margin: 0; padding: 0 8px; background: #fff; color: #000; font: 13px/32px "Noto Sans", sans-serif; }
.dbody { display: flex; gap: 27px; padding: 18px 20px 0; }
.dbody p { margin: 1px 0 0; font-size: 16px; line-height: 24px; font-weight: 300; white-space: nowrap; }
.actions { display: flex; justify-content: flex-end; padding: 24px 19px 19px; }
.actions button { width: 100px; height: 26px; border-radius: 13px; background: #469ef5; font-weight: 300; }
.pointer { position: absolute; z-index: 2; left: 236px; top: 75px; filter: drop-shadow(3px 4px 2px rgba(0, 0, 0, .5)); }

.watermark { position: absolute; right: 80px; bottom: 30px; z-index: 3; overflow: visible; pointer-events: none; }
.mark { fill: rgba(255, 255, 255, .75); stroke: rgba(205, 205, 205, .8); stroke-width: 2; }
.bai { font: 700 62px "Liberation Sans", sans-serif; }
.du { font: 36px "Liberation Sans", sans-serif; }
.jy { font: 700 47px "Noto Sans CJK SC", sans-serif; }
.site { fill: #dcdcdc; stroke: #dcdcdc; stroke-width: 1; font: 32px "Noto Sans", sans-serif; }
</style>
